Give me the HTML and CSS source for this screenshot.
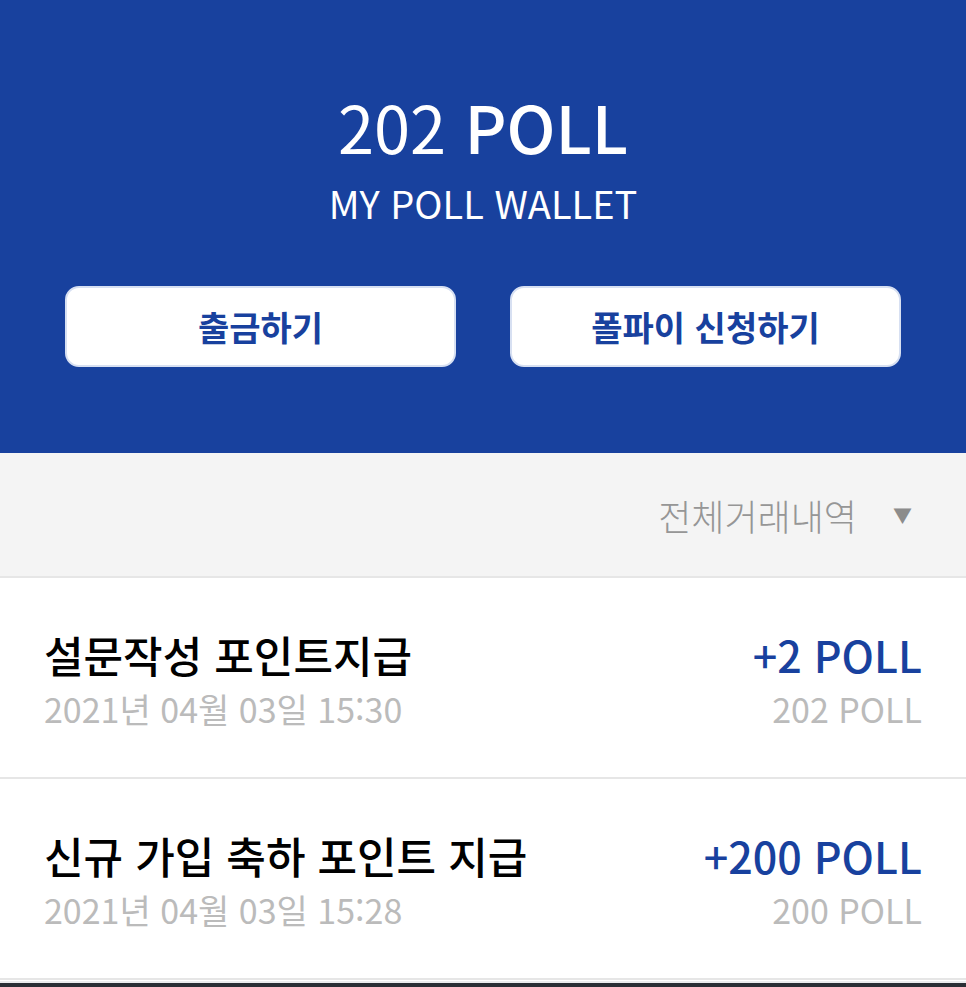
FILE: index.html
```html
<!DOCTYPE html>
<html lang="ko">
<head>
    <meta charset="UTF-8">
    <meta name="viewport" content="width=device-width, initial-scale=1.0">
    <title>MY POLL WALLET</title>
    <link rel="stylesheet" href="styles.css">
</head>
<body>
    <div id="wallet-header">
        <div class="balance"><span class="balance-num">202</span> <span class="balance-unit">POLL</span></div>
        <div class="wallet-title">MY POLL WALLET</div>
        <div class="header-buttons">
            <a href="javascript:void(0)" class="header-btn">출금하기</a>
            <a href="javascript:void(0)" class="header-btn">폴파이 신청하기</a>
        </div>
    </div>
    <div id="filter-bar">
        <span class="filter-label">전체거래내역</span>
        <span class="filter-arrow">&#9660;</span>
    </div>
    <div id="history">
        <div class="history-row">
            <div class="row-left">
                <div class="row-title">설문작성 포인트지급</div>
                <div class="row-date">2021년 04월 03일 15:30</div>
            </div>
            <div class="row-right">
                <div class="row-amount">+2 POLL</div>
                <div class="row-total">202 POLL</div>
            </div>
        </div>
        <div class="history-row">
            <div class="row-left">
                <div class="row-title">신규 가입 축하 포인트 지급</div>
                <div class="row-date">2021년 04월 03일 15:28</div>
            </div>
            <div class="row-right">
                <div class="row-amount">+200 POLL</div>
                <div class="row-total">200 POLL</div>
            </div>
        </div>
    </div>
    <div id="bottom-bar"></div>
</body>
</html>
```

FILE: styles.css
```css
body {
    margin: 0;
    background-color: white;
    font-family: "Noto Sans CJK KR", "Noto Sans", sans-serif;
    height: 987px;
    display: flex;
    flex-direction: column;
    overflow: hidden;
}
#wallet-header {
    background-color: rgb(24,65,158);
    color: white;
    height: 453px;
    box-sizing: border-box;
    padding-top: 86px;
    text-align: center;
}
.balance {
    font-size: 65px;
    line-height: 80px;
}
.balance-num {
    font-weight: 400;
}
.balance-unit {
    font-weight: 500;
}
.wallet-title {
    font-size: 38px;
    line-height: 50px;
    margin-top: 12px;
}
.header-buttons {
    display: flex;
    justify-content: space-between;
    padding: 0 65px;
    margin-top: 58px;
}
.header-btn {
    width: 391px;
    height: 81px;
    box-sizing: border-box;
    background-color: white;
    border: 2px solid rgb(215,224,242);
    border-radius: 14px;
    display: flex;
    align-items: center;
    justify-content: center;
    color: rgb(24,65,158);
    font-size: 34px;
    font-weight: 700;
    text-decoration: none;
}
#filter-bar {
    height: 123px;
    background-color: rgb(244,244,244);
    border-bottom: 2px solid rgb(230,230,230);
    display: flex;
    align-items: center;
    justify-content: flex-end;
    padding-right: 54px;
}
.filter-label {
    color: rgb(150,150,150);
    font-size: 36px;
    font-weight: 300;
}
.filter-arrow {
    color: rgb(140,140,140);
    font-size: 19px;
    margin-left: 36px;
}
.history-row {
    height: 201px;
    box-sizing: border-box;
    border-bottom: 2px solid rgb(230,230,230);
    display: flex;
    justify-content: space-between;
    align-items: center;
    padding: 6px 44px 0 44px;
}
.row-title {
    color: black;
    font-size: 43px;
    font-weight: 500;
    line-height: 56px;
}
.row-date, .row-total {
    color: rgb(187,187,187);
    font-size: 34px;
    line-height: 54px;
}
.row-right {
    text-align: right;
}
.row-amount {
    color: rgb(24,65,158);
    font-size: 43px;
    font-weight: 500;
    line-height: 56px;
}
#bottom-bar {
    margin-top: auto;
    height: 4px;
    background-color: rgb(42,46,53);
    border-top: 2px solid rgb(235,236,238);
}
```
